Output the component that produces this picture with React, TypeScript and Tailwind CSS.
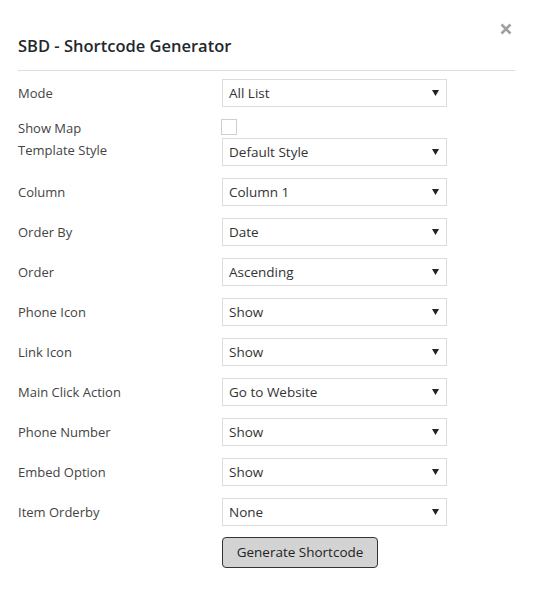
const fields = [
  { label: "Column", value: "Column 1" },
  { label: "Order By", value: "Date" },
  { label: "Order", value: "Ascending" },
  { label: "Phone Icon", value: "Show" },
  { label: "Link Icon", value: "Show" },
  { label: "Main Click Action", value: "Go to Website" },
  { label: "Phone Number", value: "Show" },
  { label: "Embed Option", value: "Show" },
  { label: "Item Orderby", value: "None" },
];

const SelectBox = ({ value }: { value: string }) => {
  return (
    <div className="w-[225px] h-[28px] border border-[#dcdcdc] bg-white flex items-center justify-between pl-[6px] pr-[7px] text-[13.5px] text-[#333]">
      <span className="pt-[1px]">{value}</span>
      <svg width="7" height="6" viewBox="0 0 7 6">
        <path d="M0 0 L7 0 L3.5 6 Z" fill="#222" />
      </svg>
    </div>
  );
};

const Row = ({ label, value }: { label: string; value: string }) => {
  return (
    <div className="flex items-center h-[28px] mb-[12px]">
      <div className="w-[204px] text-[13px] text-[#444] pt-[1px]">{label}</div>
      <SelectBox value={value} />
    </div>
  );
};

export default function App() {
  return (
    <div
      className="w-[533px] h-[596px] bg-white relative"
      style={{ fontFamily: '"Open Sans", "Noto Sans", sans-serif' }}
    >
      <button className="absolute left-[500px] top-[23px] w-[12px] h-[12px]">
        <svg width="12" height="12" viewBox="0 0 12 12">
          <path d="M1.5 1.5 L10.5 10.5 M10.5 1.5 L1.5 10.5" stroke="#a0a0a0" strokeWidth="2.6" />
        </svg>
      </button>

      <div className="px-[18px]">
        <div className="h-[71px] border-b border-[#dddddd] flex items-center pt-[24px] pb-[2px]">
          <h2 className="text-[16.5px] font-semibold text-[#23282d]">SBD - Shortcode Generator</h2>
        </div>

        <div className="pt-[8px]">
          <div className="flex items-center h-[28px] mb-[12px]">
            <div className="w-[204px] text-[13px] text-[#444] pt-[1px]">Mode</div>
            <SelectBox value="All List" />
          </div>

          <div className="flex items-center h-[16px] mb-[3px]">
            <div className="w-[203px] text-[13px] text-[#444] pt-[3px]">Show Map</div>
            <div className="w-[16px] h-[16px] border border-[#cfcfcf] bg-white" />
          </div>

          <div className="flex items-center h-[28px] mb-[12px]">
            <div className="w-[204px] text-[13px] text-[#444] -mt-[3px]">Template Style</div>
            <SelectBox value="Default Style" />
          </div>

          {fields.map((f) => (
            <Row key={f.label} label={f.label} value={f.value} />
          ))}

          <div className="flex">
            <div className="w-[204px]" />
            <button className="w-[156px] h-[31px] -mt-[1px] bg-[#d3d3d3] border border-[#333] rounded-[4px] text-[13.5px] text-[#222]">
              Generate Shortcode
            </button>
          </div>
        </div>
      </div>
    </div>
  );
}
